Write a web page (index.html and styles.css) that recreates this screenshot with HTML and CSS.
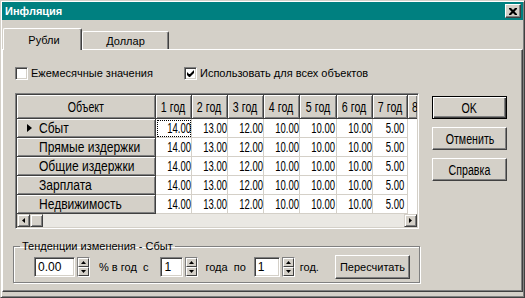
FILE: index.html
```html
<!DOCTYPE html>
<html lang="ru">

<head>
    <meta charset="utf-8">
    <link rel="stylesheet" href="styles.css">
    <title>Инфляция</title>
</head>

<body>
    <div class="window">
        <div class="titlebar">
            <span class="title">Инфляция</span>
            <span class="close-btn">
                <svg width="8" height="7" viewBox="0 0 8 7">
                    <path d="M0 0h2l2 2 2-2h2v1l-2.5 2.5 2.5 2.5v1h-2l-2-2-2 2h-2v-1l2.5-2.5-2.5-2.5z" fill="#000" />
                </svg>
            </span>
        </div>

        <div class="tabs">
            <div class="tab tab-active">Рубли</div>
            <div class="tab tab-second">Доллар</div>
        </div>

        <div class="panel">
            <div class="checks">
                <div class="check check-month">
                    <span class="box"></span>
                    <span>Ежемесячные значения</span>
                </div>
                <div class="check">
                    <span class="box">
                        <svg width="7" height="7" viewBox="0 0 7 7">
                            <path d="M0 2v3l2 2h1l4-4v-3l-4 4h-1z" fill="#000" />
                        </svg>
                    </span>
                    <span>Использовать для всех объектов</span>
                </div>
            </div>

            <div class="main">
                <div class="grid">
                    <table class="grid-table">
                        <colgroup>
                            <col class="col-name">
                            <col class="col-year">
                            <col class="col-year">
                            <col class="col-year">
                            <col class="col-year">
                            <col class="col-year5">
                            <col class="col-year">
                            <col class="col-year7">
                            <col class="col-rest">
                        </colgroup>
                        <tr class="head-row">
                            <th><span class="cap">Объект</span></th>
                            <th><span class="cap">1 год</span></th>
                            <th><span class="cap">2 год</span></th>
                            <th><span class="cap">3 год</span></th>
                            <th><span class="cap">4 год</span></th>
                            <th><span class="cap">5 год</span></th>
                            <th><span class="cap">6 год</span></th>
                            <th><span class="cap">7 год</span></th>
                            <th class="cut"><span class="cap">8 год</span></th>
                        </tr>
                        <tr>
                            <th class="row-name"><span class="marker"></span><span class="name">Сбыт</span></th>
                            <td class="focus"><span class="num">14.00</span></td>
                            <td><span class="num">13.00</span></td>
                            <td><span class="num">12.00</span></td>
                            <td><span class="num">10.00</span></td>
                            <td><span class="num">10.00</span></td>
                            <td><span class="num">10.00</span></td>
                            <td><span class="num">5.00</span></td>
                            <td class="blank"></td>
                        </tr>
                        <tr>
                            <th class="row-name"><span class="name">Прямые издержки</span></th>
                            <td><span class="num">14.00</span></td>
                            <td><span class="num">13.00</span></td>
                            <td><span class="num">12.00</span></td>
                            <td><span class="num">10.00</span></td>
                            <td><span class="num">10.00</span></td>
                            <td><span class="num">10.00</span></td>
                            <td><span class="num">5.00</span></td>
                            <td class="blank"></td>
                        </tr>
                        <tr>
                            <th class="row-name"><span class="name">Общие издержки</span></th>
                            <td><span class="num">14.00</span></td>
                            <td><span class="num">13.00</span></td>
                            <td><span class="num">12.00</span></td>
                            <td><span class="num">10.00</span></td>
                            <td><span class="num">10.00</span></td>
                            <td><span class="num">10.00</span></td>
                            <td><span class="num">5.00</span></td>
                            <td class="blank"></td>
                        </tr>
                        <tr>
                            <th class="row-name"><span class="name">Зарплата</span></th>
                            <td><span class="num">14.00</span></td>
                            <td><span class="num">13.00</span></td>
                            <td><span class="num">12.00</span></td>
                            <td><span class="num">10.00</span></td>
                            <td><span class="num">10.00</span></td>
                            <td><span class="num">10.00</span></td>
                            <td><span class="num">5.00</span></td>
                            <td class="blank"></td>
                        </tr>
                        <tr>
                            <th class="row-name"><span class="name">Недвижимость</span></th>
                            <td><span class="num">14.00</span></td>
                            <td><span class="num">13.00</span></td>
                            <td><span class="num">12.00</span></td>
                            <td><span class="num">10.00</span></td>
                            <td><span class="num">10.00</span></td>
                            <td><span class="num">10.00</span></td>
                            <td><span class="num">5.00</span></td>
                            <td class="blank"></td>
                        </tr>
                    </table>
                    <div class="hscroll">
                        <span class="sb-btn">
                            <svg width="3" height="5" viewBox="0 0 3 5"><path d="M3 0v5l-3-2.5z" fill="#000" /></svg>
                        </span>
                        <span class="sb-btn"></span>
                        <span class="sb-track"></span>
                        <span class="sb-btn">
                            <svg width="3" height="5" viewBox="0 0 3 5"><path d="M0 0v5l3-2.5z" fill="#000" /></svg>
                        </span>
                    </div>
                </div>

                <div class="buttons">
                    <div class="btn btn-default"><span class="cap">OK</span></div>
                    <div class="btn"><span class="cap">Отменить</span></div>
                    <div class="btn"><span class="cap">Справка</span></div>
                </div>
            </div>

            <fieldset class="group">
                <legend>Тенденции изменения - Сбыт</legend>
                <div class="group-row">
                    <span class="field field-rate">0.00</span>
                    <span class="spin">
                        <span class="spin-half"><svg width="5" height="3" viewBox="0 0 5 3"><path d="M0 3h5l-2.5-3z" fill="#000" /></svg></span>
                        <span class="spin-half"><svg width="5" height="3" viewBox="0 0 5 3"><path d="M0 0h5l-2.5 3z" fill="#000" /></svg></span>
                    </span>
                    <span class="label label-rate">% в год&nbsp; с</span>
                    <span class="field field-from">1</span>
                    <span class="spin">
                        <span class="spin-half"><svg width="5" height="3" viewBox="0 0 5 3"><path d="M0 3h5l-2.5-3z" fill="#000" /></svg></span>
                        <span class="spin-half"><svg width="5" height="3" viewBox="0 0 5 3"><path d="M0 0h5l-2.5 3z" fill="#000" /></svg></span>
                    </span>
                    <span class="label label-to">года&nbsp; по</span>
                    <span class="field field-to">1</span>
                    <span class="spin">
                        <span class="spin-half"><svg width="5" height="3" viewBox="0 0 5 3"><path d="M0 3h5l-2.5-3z" fill="#000" /></svg></span>
                        <span class="spin-half"><svg width="5" height="3" viewBox="0 0 5 3"><path d="M0 0h5l-2.5 3z" fill="#000" /></svg></span>
                    </span>
                    <span class="label label-year">год.</span>
                    <div class="btn btn-recalc">Пересчитать</div>
                </div>
            </fieldset>
        </div>
    </div>
</body>

</html>
```

FILE: styles.css
```css
*,
*:before,
*:after {
    box-sizing: border-box;
}

body {
    margin: 0;
    font-family: "Liberation Sans", Arial, sans-serif;
    font-size: 11px;
    color: #000;
    background: #d4d0c8;
}

/* окно */
.window {
    width: 525px;
    height: 298px;
    padding: 1px;
    background: #d4d0c8;
    border: 1px solid;
    border-color: #d4d0c8 #404040 #404040 #d4d0c8;
    box-shadow: inset 1px 1px #fff, inset -1px -1px #808080;
    overflow: hidden;
}

.titlebar {
    display: flex;
    align-items: center;
    justify-content: space-between;
    height: 18px;
    padding: 0 2px 0 3px;
    background: #008080;
}

.title {
    color: #fff;
    font-weight: bold;
    font-size: 11px;
}

.close-btn {
    display: flex;
    align-items: center;
    justify-content: center;
    width: 16px;
    height: 14px;
    background: #d4d0c8;
    border: 1px solid;
    border-color: #fff #404040 #404040 #fff;
    box-shadow: inset -1px -1px #808080;
}

/* вкладки */
.tabs {
    display: flex;
    align-items: flex-end;
    height: 21px;
    margin-top: 8px;
    padding-left: 1px;
}

.tab {
    display: flex;
    align-items: center;
    justify-content: center;
    height: 18px;
    border: 1px solid;
    border-bottom: 0;
    border-color: #fff #404040 #404040 #fff;
    border-radius: 2px 2px 0 0;
    box-shadow: inset -1px 0 #808080;
}

.tab-active {
    position: relative;
    z-index: 1;
    width: 79px;
    height: 22px;
    margin-bottom: -1px;
    background: #d4d0c8;
    padding: 0 0 0 3px;
}

.tab-second {
    width: 87px;
    padding-top: 1px;
}

.panel {
    height: 243px;
    border: 1px solid;
    border-color: #fff #404040 #404040 #fff;
    box-shadow: inset -1px -1px #808080;
    padding: 0 0 0 12px;
}

/* флажки */
.checks {
    display: flex;
    align-items: center;
    height: 16px;
    margin-top: 15px;
}

.check {
    display: flex;
    align-items: center;
    gap: 3px;
}

.check-month {
    width: 169px;
}

.box {
    display: flex;
    align-items: center;
    justify-content: center;
    width: 13px;
    height: 13px;
    background: #fff;
    border: 1px solid;
    border-color: #808080 #fff #fff #808080;
    box-shadow: inset 1px 1px #404040, inset -1px -1px #d4d0c8;
}

/* таблица */
.main {
    display: flex;
    align-items: flex-start;
    margin-top: 12px;
}

.grid {
    width: 404px;
    border: 1px solid;
    border-color: #808080 #fff #fff #808080;
    box-shadow: inset 1px 1px #404040, inset -1px -1px #d4d0c8;
    padding: 1px;
    background: #fff;
}

.grid-table {
    width: 400px;
    table-layout: fixed;
    border-collapse: separate;
    border-spacing: 0;
    font-size: 14px;
}

.col-name {
    width: 139px;
}

.col-year {
    width: 36px;
}

.col-year5 {
    width: 37px;
}

.col-year7 {
    width: 35px;
}

.col-rest {
    width: 9px;
}

/* узкий шрифт сетки */
.cap,
.num,
.name {
    display: inline-block;
    white-space: nowrap;
}

.cap {
    transform: scaleX(.76);
}

.num {
    transform: scaleX(.68);
    transform-origin: right center;
}

.name {
    transform: scaleX(.86);
    transform-origin: left center;
}

.grid-table th {
    font-weight: normal;
    background: #d4d0c8;
    border-right: 1px solid #404040;
    border-bottom: 1px solid #404040;
    box-shadow: inset 1px 1px #fff, inset -1px -1px #808080;
    padding: 0;
    white-space: nowrap;
    overflow: hidden;
}

.head-row th {
    height: 24px;
    text-align: center;
}

.grid-table th.cut {
    text-align: left;
    padding-left: 4px;
    border-right: 0;
}

.cut .cap {
    transform-origin: left center;
}

.grid-table th.row-name {
    height: 19px;
    text-align: left;
    padding-left: 22px;
    position: relative;
}

.marker {
    position: absolute;
    left: 10px;
    top: 5px;
    border-left: 5px solid #000;
    border-top: 4px solid transparent;
    border-bottom: 4px solid transparent;
}

.grid-table td {
    height: 19px;
    padding: 0 3px 0 0;
    text-align: right;
    border-right: 1px solid #d4d0c8;
    border-bottom: 1px solid #d4d0c8;
    white-space: nowrap;
}

.grid-table td.blank {
    border: 0;
}

.grid-table td.focus {
    outline: 1px dotted #000;
    outline-offset: -2px;
}

.hscroll {
    display: flex;
    height: 13px;
}

.sb-btn {
    display: flex;
    align-items: center;
    justify-content: center;
    flex: none;
    width: 13px;
    height: 13px;
    background: #d4d0c8;
    border: 1px solid;
    border-color: #d4d0c8 #404040 #404040 #d4d0c8;
    box-shadow: inset 1px 1px #fff, inset -1px -1px #808080;
}

.sb-track {
    flex: 1;
    background: #eae8e3;
}

/* кнопки */
.buttons {
    display: flex;
    flex-direction: column;
    gap: 8px;
    margin: 3px 0 0 13px;
}

.buttons .cap {
    font-size: 14px;
}

.btn {
    display: flex;
    align-items: center;
    justify-content: center;
    width: 75px;
    height: 23px;
    background: #d4d0c8;
    border: 1px solid;
    border-color: #fff #404040 #404040 #fff;
    box-shadow: inset -1px -1px #808080;
}

.btn-default {
    border: 1px solid #000;
    box-shadow: inset 1px 1px #fff, inset -1px -1px #404040, inset -2px -2px #808080;
}

/* группа */
.group {
    width: 407px;
    height: 43px;
    margin: 11px 0 0 -2px;
    padding: 0 0 0 20px;
    border: 1px solid #808080;
    box-shadow: 1px 1px #fff, inset 1px 1px #fff;
}

.group legend {
    padding: 0 2px;
    margin-left: -14px;
}

.group-row {
    display: flex;
    align-items: center;
    margin-top: 3px;
}

.field {
    display: flex;
    align-items: center;
    height: 20px;
    padding-left: 3px;
    background: #fff;
    font-size: 12px;
    border: 1px solid;
    border-color: #808080 #fff #fff #808080;
    box-shadow: inset 1px 1px #404040, inset -1px -1px #d4d0c8;
}

.field-rate {
    width: 41px;
}

.field-from {
    width: 23px;
    margin-left: 12px;
}

.field-to {
    width: 26px;
    margin-left: 8px;
}

.spin {
    display: flex;
    flex-direction: column;
    width: 13px;
    height: 20px;
    margin-left: 2px;
    border: 1px solid;
    border-color: #808080 #fff #fff #808080;
}

.spin-half {
    display: flex;
    align-items: center;
    justify-content: center;
    flex: 1;
    background: #d4d0c8;
    border: 1px solid;
    border-color: #fff #404040 #404040 #fff;
}

.label-rate {
    margin-left: 9px;
}

.label-to {
    margin-left: 7px;
}

.label-year {
    margin-left: 5px;
}

.btn-recalc {
    margin-left: 16px;
    height: 24px;
}
```
